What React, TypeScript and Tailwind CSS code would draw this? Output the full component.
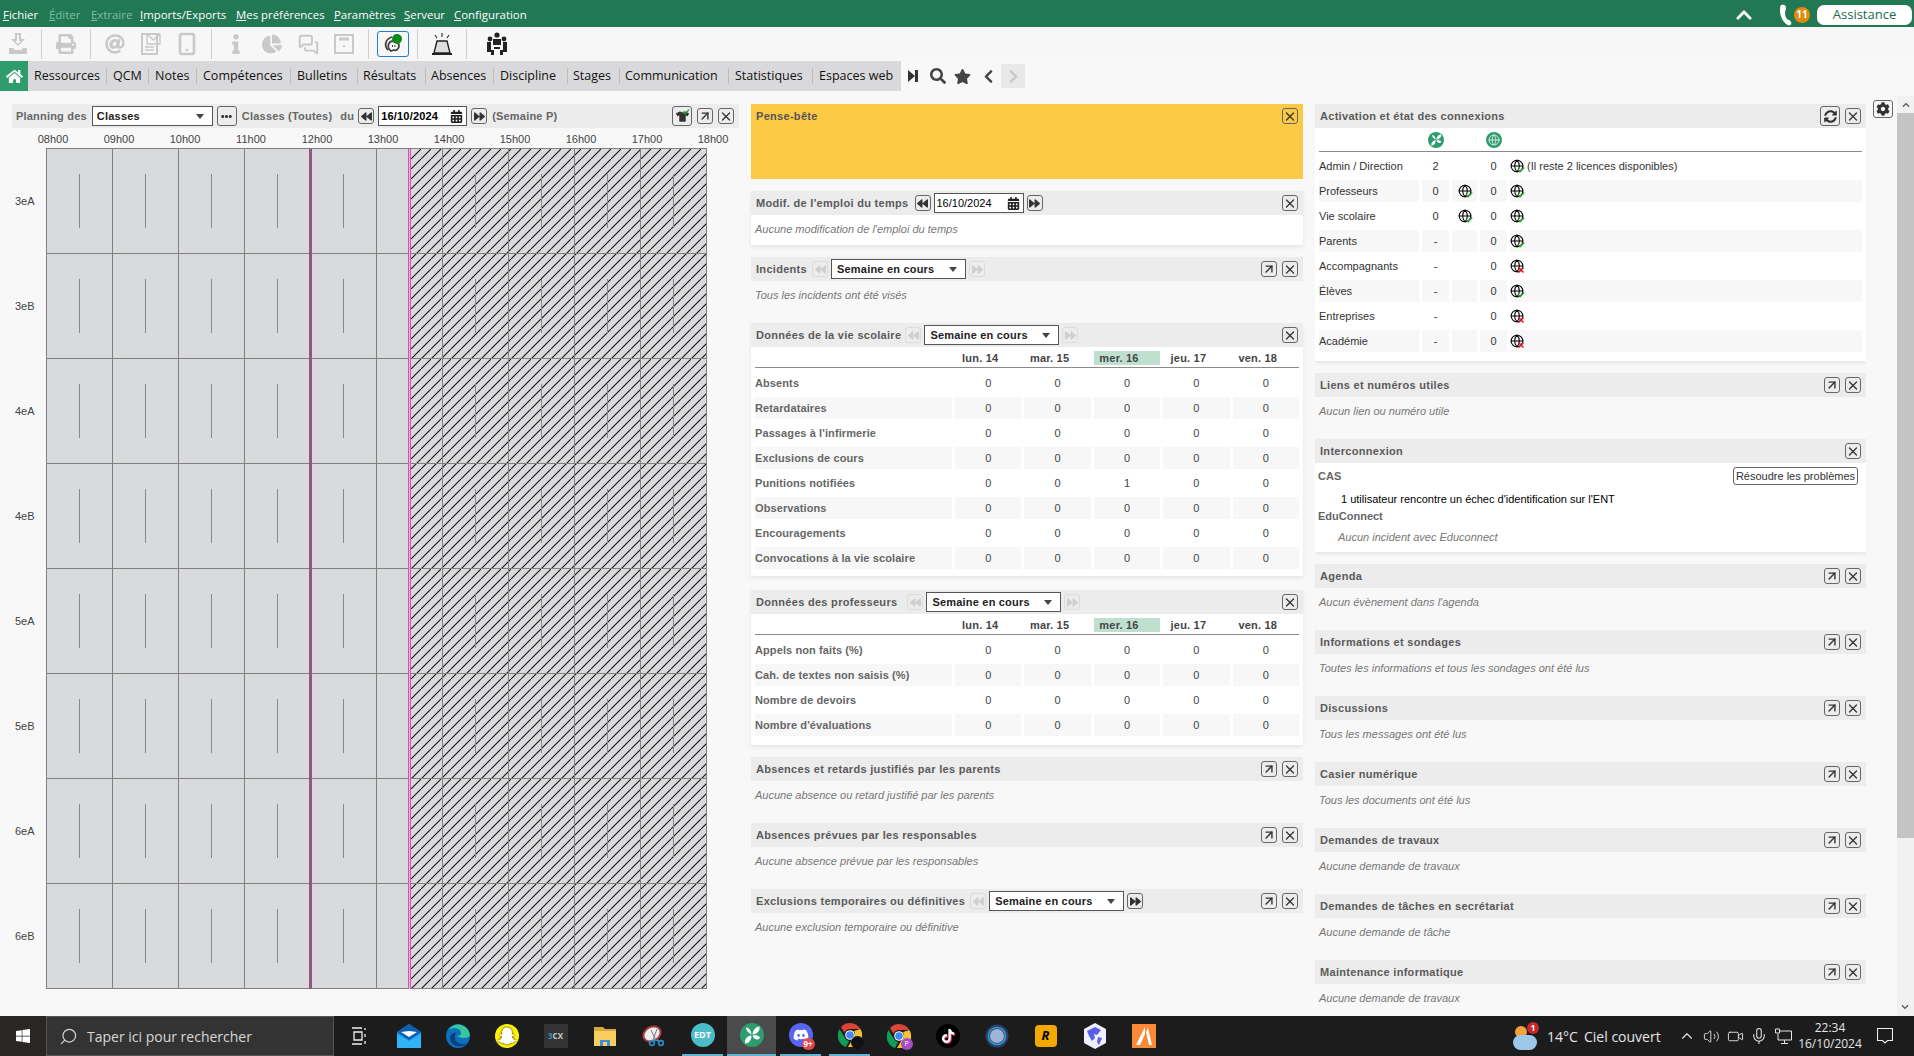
import { ReactNode } from "react";
import {
  FaAt,
  FaBackward,
  FaCalendarAlt,
  FaChartPie,
  FaChevronLeft,
  FaChevronRight,
  FaChevronUp,
  FaCog,
  FaDiscord,
  FaEllipsisH,
  FaForward,
  FaHome,
  FaInfo,
  FaPrint,
  FaSearch,
  FaSnapchatGhost,
  FaStar,
  FaSyncAlt,
  FaTiktok,
  FaTshirt,
  FaWindows,
} from "react-icons/fa";
import {
  ArrowUpRight,
  Check,
  ChevronUp,
  Globe,
  MessagesSquare,
  Mic,
  Search,
  Smartphone,
  Video,
  Volume2,
  X,
} from "lucide-react";

const hours = ["08h00", "09h00", "10h00", "11h00", "12h00", "13h00", "14h00", "15h00", "16h00", "17h00", "18h00"];
const classes = ["3eA", "3eB", "4eA", "4eB", "5eA", "5eB", "6eA", "6eB"];

function Btn({ children, off, className }: { children: ReactNode; off?: boolean; className?: string }) {
  return (
    <span
      className={
        "flex h-[16px] w-[16px] shrink-0 items-center justify-center rounded-[3px] border " +
        (off ? "border-[#dcdcdc] text-[#cfcfcf] " : "border-[#666] text-[#333] ") +
        (className || "")
      }
    >
      {children}
    </span>
  );
}

function Close() {
  return (
    <Btn>
      <X size={15} strokeWidth={2.2} />
    </Btn>
  );
}

function Expand() {
  return (
    <Btn>
      <ArrowUpRight size={16} strokeWidth={2.4} />
    </Btn>
  );
}

function Prev({ off }: { off?: boolean }) {
  return (
    <Btn off={off}>
      <FaBackward size={11} />
    </Btn>
  );
}

function Next({ off }: { off?: boolean }) {
  return (
    <Btn off={off}>
      <FaForward size={11} />
    </Btn>
  );
}

function DateBox({ w }: { w: string }) {
  return (
    <span className={"flex h-[20px] items-center justify-between border border-[#555] bg-white pl-[2px] pr-[3px] text-[11px] text-black " + w}>
      16/10/2024
      <FaCalendarAlt size={13} className="text-[#222]" />
    </span>
  );
}

function WeekSelect() {
  return (
    <span className="flex h-[20px] w-[135px] items-center justify-between border border-[#555] bg-white pl-[5px] pr-[8px] text-[11px] font-bold tracking-[0.2px] text-[#222]">
      Semaine en cours
      <span className="h-0 w-0 border-x-[4px] border-t-[5px] border-x-transparent border-t-[#444]" />
    </span>
  );
}

function Section({
  title,
  controls,
  ctl = "ml-[5px]",
  expand,
  close = true,
  text,
  white,
  className,
  children,
}: {
  title: string;
  controls?: ReactNode;
  ctl?: string;
  expand?: boolean;
  close?: boolean;
  text?: string;
  white?: boolean;
  className?: string;
  children?: ReactNode;
}) {
  return (
    <section className={"shrink-0 " + (white ? "bg-white shadow-[0_2px_4px_rgba(0,0,0,0.08)] " : "") + (className || "")}>
      <div className="flex h-[24px] items-center bg-[#ececec] pl-[5px] pr-[5px]">
        <span className="whitespace-nowrap text-[11px] font-bold tracking-[0.3px] text-[#5a5a5a]">{title}</span>
        {controls && <span className={"flex items-center gap-[3px] " + ctl}>{controls}</span>}
        <span className="ml-auto flex items-center gap-[5px]">
          {expand && <Expand />}
          {close && <Close />}
        </span>
      </div>
      {text && (
        <p className="flex h-[30px] items-center pb-[2px] pl-[4px] text-[11px] italic text-[#777]">{text}</p>
      )}
      {children}
    </section>
  );
}

function DayTable({ rows }: { rows: { label: string; mid?: string }[] }) {
  const days = ["lun. 14", "mar. 15", "mer. 16", "jeu. 17", "ven. 18"];
  return (
    <div className="px-[4px]">
      <div className="grid h-[21px] grid-cols-[197px_repeat(5,1fr)] gap-x-[3px] border-b border-[#8a8a8a] pt-[4px]">
        <span />
        {days.map((d) => (
          <span
            key={d}
            className={
              "flex h-[14px] items-center justify-center pr-[16px] text-[11px] font-bold tracking-[0.2px] text-[#444] " +
              (d === "mer. 16" ? "bg-[#bfe0d0]" : "")
            }
          >
            {d}
          </span>
        ))}
      </div>
      <div className="pt-[4px]">
        {rows.map((r, i) => (
          <div key={r.label} className="mb-[3px] grid h-[22px] grid-cols-[197px_repeat(5,1fr)] gap-x-[3px] text-[11px]">
            <span className={"flex items-center font-bold tracking-[0.1px] text-[#666] " + (i % 2 ? "bg-[#f7f7f7]" : "")}>
              {r.label}
            </span>
            {days.map((d, j) => (
              <span key={d} className={"flex items-center justify-center text-[#444] " + (i % 2 ? "bg-[#f7f7f7]" : "")}>
                {j === 2 && r.mid ? r.mid : "0"}
              </span>
            ))}
          </div>
        ))}
      </div>
    </div>
  );
}

function NetGlobe({ ok }: { ok?: boolean }) {
  return (
    <span className="relative inline-flex h-[14px] w-[14px] shrink-0 text-black">
      <Globe size={14} strokeWidth={1.8} />
      <span className="absolute -bottom-[1px] -right-[1px]">
        {ok ? (
          <Check size={8} strokeWidth={5} className="text-[#2d9c3c]" />
        ) : (
          <X size={8} strokeWidth={5} className="text-[#d8182c]" />
        )}
      </span>
    </span>
  );
}

function PronoteLogo({ size }: { size: number }) {
  return (
    <svg width={size} height={size} viewBox="0 0 24 24">
      <circle cx="12" cy="12" r="12" fill="#2d9c6f" />
      <path
        fill="#fff"
        d="M11.4 11.5C9 10 6 8 6 4.500c3.500.5 5.400 3.500 5.400 7zM12.500 11.500c.5-4.500 3-7.500 7-8 1 4.500-2.500 7.500-7 8zM12.500 12.500c2.500-.5 6-.5 7.500 2-1.500 3.500-6 2.500-7.500-2zM11.500 12.500c-4.500.5-7 3.500-6.500 8 4 0 6.500-3.500 6.500-8z"
      />
    </svg>
  );
}

function ChromeLogo() {
  return (
    <svg width="24" height="24" viewBox="0 0 24 24">
      <path fill="#db4437" d="M12 0a12 12 0 0 1 10.400 6H12a6 6 0 0 0-5.600 3.800L3 4a12 12 0 0 1 9-4z" />
      <path fill="#0f9d58" d="M1.600 6L7 15a6 6 0 0 0 4 3l-3 6A12 12 0 0 1 1.600 6z" />
      <path fill="#fbc02d" d="M22.400 6A12 12 0 0 1 10 24l5-8.400A6 6 0 0 0 16 8z" />
      <circle cx="12" cy="12" r="4.800" fill="#fff" />
      <circle cx="12" cy="12" r="3.800" fill="#4285f4" />
    </svg>
  );
}

function TaskIcon({ children, on, current }: { children: ReactNode; on?: boolean; current?: boolean }) {
  return (
    <span className={"flex h-[40px] w-[49px] shrink-0 " + (current ? "" : "px-[4px]")}>
      <span
        className={
          "flex h-full w-full items-center justify-center " +
          (on ? "border-b-[2px] border-[#63b0d2] " : "") +
          (current ? "bg-[#4b4b4b]" : "")
        }
      >
        {children}
      </span>
    </span>
  );
}

function TopMenu() {
  const items: [string, string, string, boolean][] = [
    ["F", "ichier", "w-[46px]", false],
    ["É", "diter", "w-[42px]", true],
    ["E", "xtraire", "w-[49px]", true],
    ["I", "mports/Exports", "w-[96px]", false],
    ["M", "es préférences", "w-[98px]", false],
    ["P", "aramètres", "w-[70px]", false],
    ["S", "erveur", "w-[50px]", false],
    ["C", "onfiguration", "w-[80px]", false],
  ];
  return (
    <header className="flex h-[27px] shrink-0 items-center bg-[#217853] pl-[3px] pr-[2px] pt-[2px] font-['Open_Sans',sans-serif] text-[11.4px] text-white">
      <nav className="flex">
        {items.map(([a, b, w, dim]) => (
          <span key={b} className={w + " whitespace-nowrap " + (dim ? "text-[#7fbea3]" : "")}>
            <u>{a}</u>
            {b}
          </span>
        ))}
      </nav>
      <FaChevronUp size={18} className="ml-auto" />
      <span className="relative ml-[27px] flex h-[22px] w-[30px] items-center">
        <svg width="12" height="22" viewBox="0 0 12 22" fill="#fff">
          <path d="M1 1c3-1 5 0 5 3 0 2-1 3-1 5 0 3 1 5 3 7 1-.5 2 .5 3 2 1 1.500 0 3-2 3.500C4 20 0 13 0 7c0-2 0-5 1-6z" />
        </svg>
        <span className="absolute right-0 top-[3px] flex h-[16px] w-[16px] items-center justify-center rounded-full bg-[#e08a0c] text-[10px] font-bold text-white">
          11
        </span>
      </span>
      <span className="ml-[7px] flex h-[20px] w-[95px] items-center justify-center rounded-[7px] bg-white text-[13px] text-[#1c6b49]">
        Assistance
      </span>
    </header>
  );
}

function Toolbar() {
  const sep = "flex h-[30px] items-center justify-center border-r border-[#cfcfcf] text-[#c9c9c9] ";
  const cell = "flex w-[36px] justify-center";
  return (
    <div className="flex h-[34px] shrink-0 items-center bg-[#f7f7f7]">
      <span className={sep + "w-[42px] pr-[6px]"}>
        <svg width="20" height="22" viewBox="0 0 20 22" fill="currentColor">
          <path d="M7 0h6v6h4l-7 7-7-7h4zM9 2v6H7l3 3 3-3h-2V2z" fillRule="evenodd" />
          <path d="M1 15h4l2 2h6l2-2h4v6H1z" />
        </svg>
      </span>
      <span className={sep + "w-[49px]"}>
        <FaPrint size={20} />
      </span>
      <span className={sep + "w-[121px]"}>
        <span className={cell}>
          <FaAt size={20} />
        </span>
        <span className={cell}>
          <svg width="20" height="22" viewBox="0 0 20 22" fill="none" stroke="currentColor" strokeWidth="2">
            <rect x="1" y="1" width="15" height="20" />
            <path d="M6 1h13v10H6zM6 1l6.500 6L19 1M4 14h9M4 17h9" strokeWidth="1.400" />
          </svg>
        </span>
        <span className={cell}>
          <Smartphone size={24} strokeWidth={2.6} />
        </span>
      </span>
      <span className={sep + "w-[157px]"}>
        <span className={cell}>
          <FaInfo size={20} />
        </span>
        <span className={cell}>
          <FaChartPie size={20} />
        </span>
        <span className={cell}>
          <MessagesSquare size={21} strokeWidth={2.2} />
        </span>
        <span className={cell}>
          <svg width="20" height="20" viewBox="0 0 20 20" fill="none" stroke="currentColor" strokeWidth="2">
            <rect x="1" y="1" width="18" height="18" />
            <path d="M5 5h10" strokeWidth="3" />
            <path d="M10 11v2" />
          </svg>
        </span>
      </span>
      <span className={sep + "w-[49px]"}>
        <span className="relative flex h-[26px] w-[32px] items-center justify-center rounded-[3px] border border-[#1f7fd0] text-[#444]">
          <svg width="20" height="20" viewBox="0 0 20 20" fill="none" stroke="currentColor" strokeWidth="1.800">
            <path d="M5 16C1 12 2 5 9 3" />
            <path d="M8 17c-3-2-4-6-1-9 3-2 9-1 9 4 0 3-3 5-5 4z" />
            <path d="M9 12h4" strokeDasharray="1 1.400" />
          </svg>
          <span className="absolute right-[6px] top-[2px] h-[10px] w-[10px] rounded-full bg-[#0c8a1c]" />
        </span>
      </span>
      <span className={sep + "w-[49px]"}>
        <svg width="22" height="24" viewBox="0 0 22 24">
          <path d="M6 9h10l3 12H3z" fill="#dedede" stroke="#222" strokeWidth="1.400" />
          <path d="M1 21h20v2H1z" fill="#222" />
          <path d="M11 1v4M4 3l2 3M18 3l-2 3" stroke="#333" strokeWidth="1.200" />
        </svg>
      </span>
      <span className="flex w-[60px] justify-center">
        <svg width="22" height="24" viewBox="0 0 22 24" fill="#222">
          <circle cx="11" cy="3" r="2.600" />
          <circle cx="4" cy="7" r="2.400" />
          <circle cx="18" cy="7" r="2.400" />
          <path d="M7 7h8v6H7zM1 10h4v8h3v5H5v-3H1zM21 10h-4v8h-3v5h3v-3h4zM8 15h6v2H8z" />
        </svg>
      </span>
    </div>
  );
}

function Tabs() {
  const tabs: [string, string][] = [
    ["Ressources", "w-[79px] pl-[6px]"],
    ["QCM", "w-[42px] pl-[6px]"],
    ["Notes", "w-[48px] pl-[6px]"],
    ["Compétences", "w-[94px] pl-[6px]"],
    ["Bulletins", "w-[67px] pl-[6px]"],
    ["Résultats", "w-[68px] pl-[5px]"],
    ["Absences", "w-[68px] pl-[5px]"],
    ["Discipline", "w-[74px] pl-[6px]"],
    ["Stages", "w-[52px] pl-[5px]"],
    ["Communication", "w-[109px] pl-[5px]"],
    ["Statistiques", "w-[84px] pl-[6px]"],
    ["Espaces web", "w-[88px] pl-[6px]"],
  ];
  return (
    <div className="flex h-[30px] shrink-0 items-center">
      <span className="flex h-full w-[28px] items-center justify-center bg-[#2f9c6e] text-white">
        <FaHome size={17} />
      </span>
      <div className="flex h-full w-[873px] items-center bg-[#d9d9db] font-['Open_Sans',sans-serif] text-[12.5px] text-[#111]">
        {tabs.map(([t, c], i) => (
          <span key={t} className={"flex h-[16px] items-center whitespace-nowrap " + c + (i < 11 ? " border-r border-[#bdbdbd]" : "")}>
            {t}
          </span>
        ))}
      </div>
      <span className="ml-[7px] flex h-[12px] w-[10px] items-center">
        <span className="h-0 w-0 border-y-[6px] border-l-[7px] border-y-transparent border-l-[#333]" />
        <span className="h-[12px] w-[3px] bg-[#333]" />
      </span>
      <FaSearch size={16} className="ml-[12px] text-[#444]" />
      <FaStar size={17} className="ml-[8px] text-[#444]" />
      <FaChevronLeft size={15} className="ml-[10px] text-[#444]" />
      <span className="ml-[5px] flex h-[24px] w-[24px] items-center justify-center bg-[#e8e8e8]">
        <FaChevronRight size={15} className="text-[#c8c8c8]" />
      </span>
    </div>
  );
}

function Planning() {
  return (
    <section className="ml-[12px] w-[727px] shrink-0">
      <div className="flex h-[24px] items-center bg-[#ececec] pl-[4px] pr-[5px] text-[11px] font-bold tracking-[0.2px] text-[#666]">
        <span>Planning des</span>
        <span className="ml-[5px] flex h-[20px] w-[121px] items-center justify-between border border-[#555] bg-white pl-[4px] pr-[8px] text-[#222]">
          Classes
          <span className="h-0 w-0 border-x-[4px] border-t-[5px] border-x-transparent border-t-[#444]" />
        </span>
        <Btn className="ml-[4px] h-[20px] w-[20px]">
          <FaEllipsisH size={11} />
        </Btn>
        <span className="ml-[5px]">Classes (Toutes)</span>
        <span className="ml-[8px]">du</span>
        <Btn className="ml-[4px]">
          <FaBackward size={11} />
        </Btn>
        <DateBox w="ml-[4px] w-[89px]" />
        <Btn className="ml-[4px]">
          <FaForward size={11} />
        </Btn>
        <span className="ml-[5px]">(Semaine P)</span>
        <span className="ml-auto flex items-center gap-[5px]">
          <Btn className="relative h-[20px] w-[20px]">
            <FaTshirt size={13} />
            <Check size={8} strokeWidth={4} className="absolute right-[1px] top-[1px] text-[#2d9c3c]" />
          </Btn>
          <Expand />
          <Close />
        </span>
      </div>
      {/* Hours */}
      <div className="ml-[8px] flex h-[20px] items-end pb-[1px] text-[11px] text-[#444]">
        {hours.map((h) => (
          <span key={h} className="w-[66px] shrink-0 text-center">
            {h}
          </span>
        ))}
      </div>
      <div className="flex">
        <div className="w-[34px] shrink-0 pt-[1px] text-[11px] text-[#444]">
          {classes.map((c) => (
            <div key={c} className="flex h-[105px] items-center pl-[3px]">
              {c}
            </div>
          ))}
        </div>
        <div className="relative w-[661px] border-l border-t border-[#808080] bg-[#d9dadc]">
          <svg className="absolute inset-y-0 left-[364px] h-full w-[296px]">
            <defs>
              <pattern id="hatch" width="10" height="10" patternUnits="userSpaceOnUse">
                <path d="M-1 11L11 -1" stroke="#111" strokeWidth="1.100" />
              </pattern>
            </defs>
            <rect width="100%" height="100%" fill="url(#hatch)" />
          </svg>
          {classes.map((c) => (
            <div key={c} className="relative grid h-[105px] grid-cols-[repeat(10,66px)]">
              {hours.slice(1).map((h) => (
                <div key={h} className="flex items-center justify-center border-b border-r border-[#808080]">
                  <span className="h-[54px] w-px bg-[#888]" />
                </div>
              ))}
            </div>
          ))}
          <div className="absolute inset-y-0 left-[262px] w-[3px] bg-[#94567f]" />
          <div className="absolute inset-y-0 left-[361px] w-[3px] border-x border-[#d64fb4] bg-[#e8b8dc]" />
        </div>
      </div>
    </section>
  );
}

function Middle() {
  return (
    <div className="ml-[12px] flex w-[552px] shrink-0 flex-col">
      <section className="mb-[12px] h-[75px] bg-[#fcc946]">
        <div className="flex h-[24px] items-center pl-[5px] pr-[5px] text-[11px] font-bold tracking-[0.3px] text-[#555]">
          Pense-bête
          <span className="ml-auto">
            <Close />
          </span>
        </div>
      </section>
      <Section
        title="Modif. de l'emploi du temps"
        white
        ctl="ml-[6px]"
        className="mb-[12px]"
        text="Aucune modification de l'emploi du temps"
        controls={
          <>
            <Prev />
            <DateBox w="w-[90px]" />
            <Next />
          </>
        }
      />
      <Section
        title="Incidents"
        expand
        className="mb-[12px]"
        text="Tous les incidents ont été visés"
        controls={
          <>
            <Prev off />
            <WeekSelect />
            <Next off />
          </>
        }
      />
      <Section
        title="Données de la vie scolaire"
        white
        ctl="ml-[4px]"
        className="mb-[14px] h-[253px]"
        controls={
          <>
            <Prev off />
            <WeekSelect />
            <Next off />
          </>
        }
      >
        <DayTable
          rows={[
            { label: "Absents" },
            { label: "Retardataires" },
            { label: "Passages à l'infirmerie" },
            { label: "Exclusions de cours" },
            { label: "Punitions notifiées", mid: "1" },
            { label: "Observations" },
            { label: "Encouragements" },
            { label: "Convocations à la vie scolaire" },
          ]}
        />
      </Section>
      <Section
        title="Données des professeurs"
        white
        ctl="ml-[10px]"
        className="mb-[12px] h-[155px]"
        controls={
          <>
            <Prev off />
            <WeekSelect />
            <Next off />
          </>
        }
      >
        <DayTable
          rows={[
            { label: "Appels non faits (%)" },
            { label: "Cah. de textes non saisis (%)" },
            { label: "Nombre de devoirs" },
            { label: "Nombre d'évaluations" },
          ]}
        />
      </Section>
      <Section title="Absences et retards justifiés par les parents" expand className="mb-[12px]" text="Aucune absence ou retard justifié par les parents" />
      <Section title="Absences prévues par les responsables" expand className="mb-[12px]" text="Aucune absence prévue par les responsables" />
      <Section
        title="Exclusions temporaires ou définitives"
        expand
        text="Aucune exclusion temporaire ou définitive"
        controls={
          <>
            <Prev off />
            <WeekSelect />
            <Next />
          </>
        }
      />
    </div>
  );
}

function Connections() {
  const rows: [string, string, boolean, boolean][] = [
    ["Professeurs", "0", true, true],
    ["Vie scolaire", "0", true, true],
    ["Parents", "-", false, true],
    ["Accompagnants", "-", false, false],
    ["Élèves", "-", false, true],
    ["Entreprises", "-", false, false],
    ["Académie", "-", false, false],
  ];
  const grid = "mb-[3px] grid h-[22px] grid-cols-[100px_27px_25px_27px_1fr] gap-x-[3px] text-[11px] text-[#333]";
  return (
    <div className="px-[4px]">
      <div className="grid h-[24px] grid-cols-[100px_27px_25px_27px_1fr] gap-x-[3px] border-b border-[#8a8a8a]">
        <span />
        <span className="flex items-center justify-center">
          <PronoteLogo size={16} />
        </span>
        <span />
        <span className="flex items-center justify-center">
          <span className="flex h-[16px] w-[16px] items-center justify-center rounded-full bg-[#2f9c6e] text-[#cfe9dd]">
            <Globe size={12} />
          </span>
        </span>
      </div>
      <div className="pt-[3px]">
        <div className={grid}>
          <span className="flex items-center">Admin / Direction</span>
          <span className="flex items-center justify-center">2</span>
          <span />
          <span className="flex items-center justify-center">0</span>
          <span className="flex items-center gap-[3px]">
            <NetGlobe ok />
            (Il reste 2 licences disponibles)
          </span>
        </div>
        {rows.map(([label, a, g1, g2], i) => {
          const bg = i % 2 === 0 ? "bg-[#f7f7f7] " : "";
          return (
            <div key={label} className={grid}>
              <span className={bg + "flex items-center"}>{label}</span>
              <span className={bg + "flex items-center justify-center"}>{a}</span>
              <span className={bg + "flex items-center justify-center"}>{g1 && <NetGlobe ok />}</span>
              <span className={bg + "flex items-center justify-center"}>0</span>
              <span className={bg + "flex items-center"}>
                <NetGlobe ok={g2} />
              </span>
            </div>
          );
        })}
      </div>
    </div>
  );
}

function RightCol() {
  const more: [string, string][] = [
    ["Agenda", "Aucun évènement dans l'agenda"],
    ["Informations et sondages", "Toutes les informations et tous les sondages ont été lus"],
    ["Discussions", "Tous les messages ont été lus"],
    ["Casier numérique", "Tous les documents ont été lus"],
    ["Demandes de travaux", "Aucune demande de travaux"],
    ["Demandes de tâches en secrétariat", "Aucune demande de tâche"],
    ["Maintenance informatique", "Aucune demande de travaux"],
  ];
  return (
    <div className="ml-[12px] flex w-[551px] shrink-0 flex-col overflow-hidden">
      <section className="mb-[12px] h-[257px] shrink-0 bg-white shadow-[0_2px_4px_rgba(0,0,0,0.08)]">
        <div className="flex h-[24px] items-center bg-[#ececec] pl-[5px] pr-[5px]">
          <span className="text-[11px] font-bold tracking-[0.3px] text-[#5a5a5a]">Activation et état des connexions</span>
          <span className="ml-auto flex items-center gap-[5px]">
            <Btn className="h-[20px] w-[20px]">
              <FaSyncAlt size={13} />
            </Btn>
            <Close />
          </span>
        </div>
        <Connections />
      </section>
      <Section title="Liens et numéros utiles" expand className="mb-[12px]" text="Aucun lien ou numéro utile" />
      <Section title="Interconnexion" white className="mb-[12px]">
        <div className="h-[89px] pl-[3px] pr-[8px] pt-[4px] text-[11px]">
          <div className="flex h-[18px] items-center justify-between">
            <span className="font-bold text-[#666]">CAS</span>
            <span className="flex h-[18px] w-[125px] items-center justify-center rounded-[3px] border border-[#666] text-[#333]">
              Résoudre les problèmes
            </span>
          </div>
          <p className="mt-[6px] pl-[23px] text-black">1 utilisateur rencontre un échec d'identification sur l'ENT</p>
          <p className="font-bold text-[#666]">EduConnect</p>
          <p className="mt-[5px] pl-[20px] italic text-[#777]">Aucun incident avec Educonnect</p>
        </div>
      </Section>
      {more.map(([t, d]) => (
        <Section key={t} title={t} expand className="mb-[12px]" text={d} />
      ))}
    </div>
  );
}

function Taskbar() {
  return (
    <footer className="flex h-[40px] shrink-0 items-center bg-[#1c1c1c] font-['Open_Sans',sans-serif] text-[#e6e6e6]">
      <span className="flex h-full w-[46px] items-center justify-center bg-[#2a2624] text-white">
        <FaWindows size={16} />
      </span>
      <span className="flex h-full w-[288px] items-center border border-[#555] bg-[#333] pl-[12px] text-[14px] text-[#d8d8d8]">
        <Search size={19} className="-scale-x-100" strokeWidth={1.5} />
        <span className="ml-[9px]">Taper ici pour rechercher</span>
      </span>
      <span className="flex w-[50px] shrink-0 justify-center">
        <svg width="16" height="18" viewBox="0 0 16 18" fill="none" stroke="#eee" strokeWidth="1.300">
          <path d="M1 1h10M3 5h8v8H3zM1 17h10" />
          <path d="M14 1v2M14 7v3M14 14v3" />
        </svg>
      </span>
      <TaskIcon>
        <svg width="24" height="24" viewBox="0 0 24 24">
          <path d="M12 0L24 8v16H0V8z" fill="#1c93e8" />
          <path d="M0 8l12 8 12-8-12-8z" fill="#0a5fb0" />
          <path d="M4 8l8-1 8 1-8 5z" fill="#fff" />
          <path d="M0 10l12 7 12-7v14H0z" fill="#30b4f5" />
        </svg>
      </TaskIcon>
      <TaskIcon>
        <svg width="24" height="24" viewBox="0 0 24 24">
          <circle cx="12" cy="12" r="12" fill="#0c6fc0" />
          <path d="M24 12a12 12 0 0 0-22-6c4-3 11-3 13 2 1 3-2 4-4 4 3 2 9 3 13 0z" fill="#37c79a" />
          <path d="M4 14c0-3 3-6 7-5-3 1-3 6 0 9 2 2 7 3 10 1-6 6-17 3-17-5z" fill="#0b3f7d" />
        </svg>
      </TaskIcon>
      <TaskIcon>
        <span className="flex h-[24px] w-[24px] items-center justify-center rounded-full bg-[#fff200] text-white">
          <FaSnapchatGhost size={18} className="drop-shadow-[0_0_1px_#111]" />
        </span>
      </TaskIcon>
      <TaskIcon>
        <span className="flex h-[24px] w-[24px] items-center justify-center bg-[#333] text-[8px] font-bold text-[#ccc]">
          <span className="text-[#2b95c4]">3</span>CX
        </span>
      </TaskIcon>
      <TaskIcon>
        <svg width="22" height="20" viewBox="0 0 22 20">
          <path d="M0 1h9l2 2h11v17H0z" fill="#d9a441" />
          <path d="M0 5h22v15H0z" fill="#f8cf5e" />
          <path d="M6 14h10v6H6z" fill="#3c8ddb" />
          <path d="M9 16h4v4H9z" fill="#f8cf5e" />
        </svg>
      </TaskIcon>
      <TaskIcon>
        <svg width="24" height="22" viewBox="0 0 24 22" fill="none">
          <ellipse cx="10" cy="9" rx="9" ry="7" fill="#eee" stroke="#b03a3a" strokeWidth="2" transform="rotate(-30 10 9)" />
          <path d="M9 5l5 10M15 4l-4 11" stroke="#777" strokeWidth="1" />
          <circle cx="10" cy="18" r="2.400" stroke="#2b8bc8" strokeWidth="1.600" />
          <circle cx="19" cy="18" r="2.400" stroke="#2b8bc8" strokeWidth="1.600" />
          <path d="M12 15l6 1" stroke="#2b8bc8" strokeWidth="1.600" />
        </svg>
      </TaskIcon>
      <TaskIcon on>
        <span className="flex h-[24px] w-[24px] items-center justify-center rounded-full bg-[#4cbcc8] text-[9px] font-bold text-white">
          EDT
        </span>
      </TaskIcon>
      <TaskIcon on current>
        <PronoteLogo size={24} />
      </TaskIcon>
      <TaskIcon on>
        <span className="relative flex h-[24px] w-[24px] items-center justify-center rounded-full bg-[#5865f2] text-white">
          <FaDiscord size={16} />
          <span className="absolute -bottom-[3px] -right-[2px] flex h-[12px] w-[13px] items-center justify-center rounded-full bg-[#e0464a] text-[8px] font-bold">
            9+
          </span>
        </span>
      </TaskIcon>
      <TaskIcon on>
        <span className="relative flex">
          <ChromeLogo />
          <span className="absolute -bottom-[2px] -right-[2px] h-[13px] w-[13px] rounded-full bg-[#111]" />
        </span>
      </TaskIcon>
      <TaskIcon>
        <span className="relative flex">
          <ChromeLogo />
          <span className="absolute -bottom-[2px] -right-[2px] flex h-[12px] w-[12px] items-center justify-center rounded-full bg-[#a54cc6] text-[7px] text-white">
            P
          </span>
        </span>
      </TaskIcon>
      <TaskIcon>
        <span className="flex h-[24px] w-[24px] items-center justify-center rounded-full bg-black text-white">
          <FaTiktok size={14} className="drop-shadow-[1px_1px_0_#e8305a]" />
        </span>
      </TaskIcon>
      <TaskIcon>
        <svg width="24" height="24" viewBox="0 0 24 24" fill="none">
          <circle cx="12" cy="12" r="11.500" fill="#2b3f70" />
          <circle cx="12" cy="12" r="8.500" stroke="#38a0cc" strokeWidth="1.500" />
          <circle cx="12" cy="12" r="7" fill="#9fb3d4" />
        </svg>
      </TaskIcon>
      <TaskIcon>
        <span className="flex h-[22px] w-[22px] items-center justify-center rounded-[4px] bg-[#f5a800] text-[13px] font-bold italic text-black">
          R
        </span>
      </TaskIcon>
      <TaskIcon>
        <svg width="22" height="26" viewBox="0 0 22 26">
          <path d="M11 0l11 6v14l-11 6L0 20V6z" fill="#eef0ff" />
          <path d="M3 8l8-4 6 3-4 5-3-1 1 4-3 3-3-5zM14 14l4 1-3 7-2-3z" fill="#5b5fe8" />
        </svg>
      </TaskIcon>
      <TaskIcon>
        <svg width="24" height="24" viewBox="0 0 24 24">
          <rect width="24" height="24" fill="#f88a3a" />
          <path d="M13 3L4 21h4l5-11zM14 8l3 13h3L16 4z" fill="#fff" />
        </svg>
      </TaskIcon>
      <div className="ml-auto flex items-center">
        <span className="relative flex h-[28px] w-[26px] shrink-0 items-end">
          <span className="absolute left-[2px] top-[4px] h-[12px] w-[12px] rounded-full bg-[#f0a33c]" />
          <span className="relative h-[15px] w-[24px] rounded-full bg-[#9cc8ec]" />
          <span className="absolute right-0 top-0 flex h-[12px] w-[12px] items-center justify-center rounded-full bg-[#c8282c] text-[8px] font-bold text-white">
            1
          </span>
        </span>
        <span className="ml-[8px] w-[37px] text-[14px]">14°C</span>
        <span className="w-[91px] whitespace-nowrap text-[14px]">Ciel couvert</span>
        <span className="flex w-[24px] justify-center">
          <ChevronUp size={18} strokeWidth={1.5} />
        </span>
        <span className="flex w-[24px] justify-center">
          <Volume2 size={17} strokeWidth={1.3} />
        </span>
        <span className="flex w-[24px] justify-center">
          <Video size={17} strokeWidth={1.3} />
        </span>
        <span className="flex w-[24px] justify-center">
          <Mic size={18} strokeWidth={1.4} />
        </span>
        <span className="flex w-[24px] justify-center">
          <svg width="17" height="17" viewBox="0 0 17 17" fill="none" stroke="#e6e6e6" strokeWidth="1">
            <path d="M.5 1h4v4h-4zM5 3h11.500v9H3V6M9.500 12v3M6 15.500h7" />
          </svg>
        </span>
        <span className="flex w-[70px] flex-col items-center text-[12px] leading-[16px]">
          <span>22:34</span>
          <span>16/10/2024</span>
        </span>
        <span className="flex w-[40px] justify-center">
          <svg width="16" height="16" viewBox="0 0 16 16" fill="none" stroke="#eee" strokeWidth="1.100">
            <path d="M.5 .5h15v12h-5L8 15l-2.500-2.500h-5z" />
          </svg>
        </span>
        <span className="w-[9px]" />
      </div>
    </footer>
  );
}

export default function App() {
  return (
    <div className="flex h-[1056px] w-[1914px] flex-col overflow-hidden bg-[#f8f8f8] font-['Liberation_Sans',Arial,sans-serif]">
      <TopMenu />
      <Toolbar />
      <Tabs />
      <main className="flex h-[925px] shrink-0 overflow-hidden pt-[13px]">
        <Planning />
        <Middle />
        <RightCol />
        {/* Settings + scrollbar */}
        <span className="ml-[7px] mt-[-4px] flex h-[18px] w-[20px] shrink-0 items-center justify-center rounded-[3px] border border-[#666] text-[#333]">
          <FaCog size={14} />
        </span>
        <div className="ml-[4px] mt-[-8px] flex w-[17px] shrink-0 flex-col bg-[#f1f1f1]">
          <span className="flex h-[17px] items-center justify-center text-[#555]">
            <FaChevronUp size={8} />
          </span>
          <span className="h-[725px] bg-[#c4c4c4]" />
          <span className="mt-auto flex h-[17px] items-center justify-center rotate-180 text-[#555]">
            <FaChevronUp size={8} />
          </span>
        </div>
      </main>
      <Taskbar />
    </div>
  );
}
